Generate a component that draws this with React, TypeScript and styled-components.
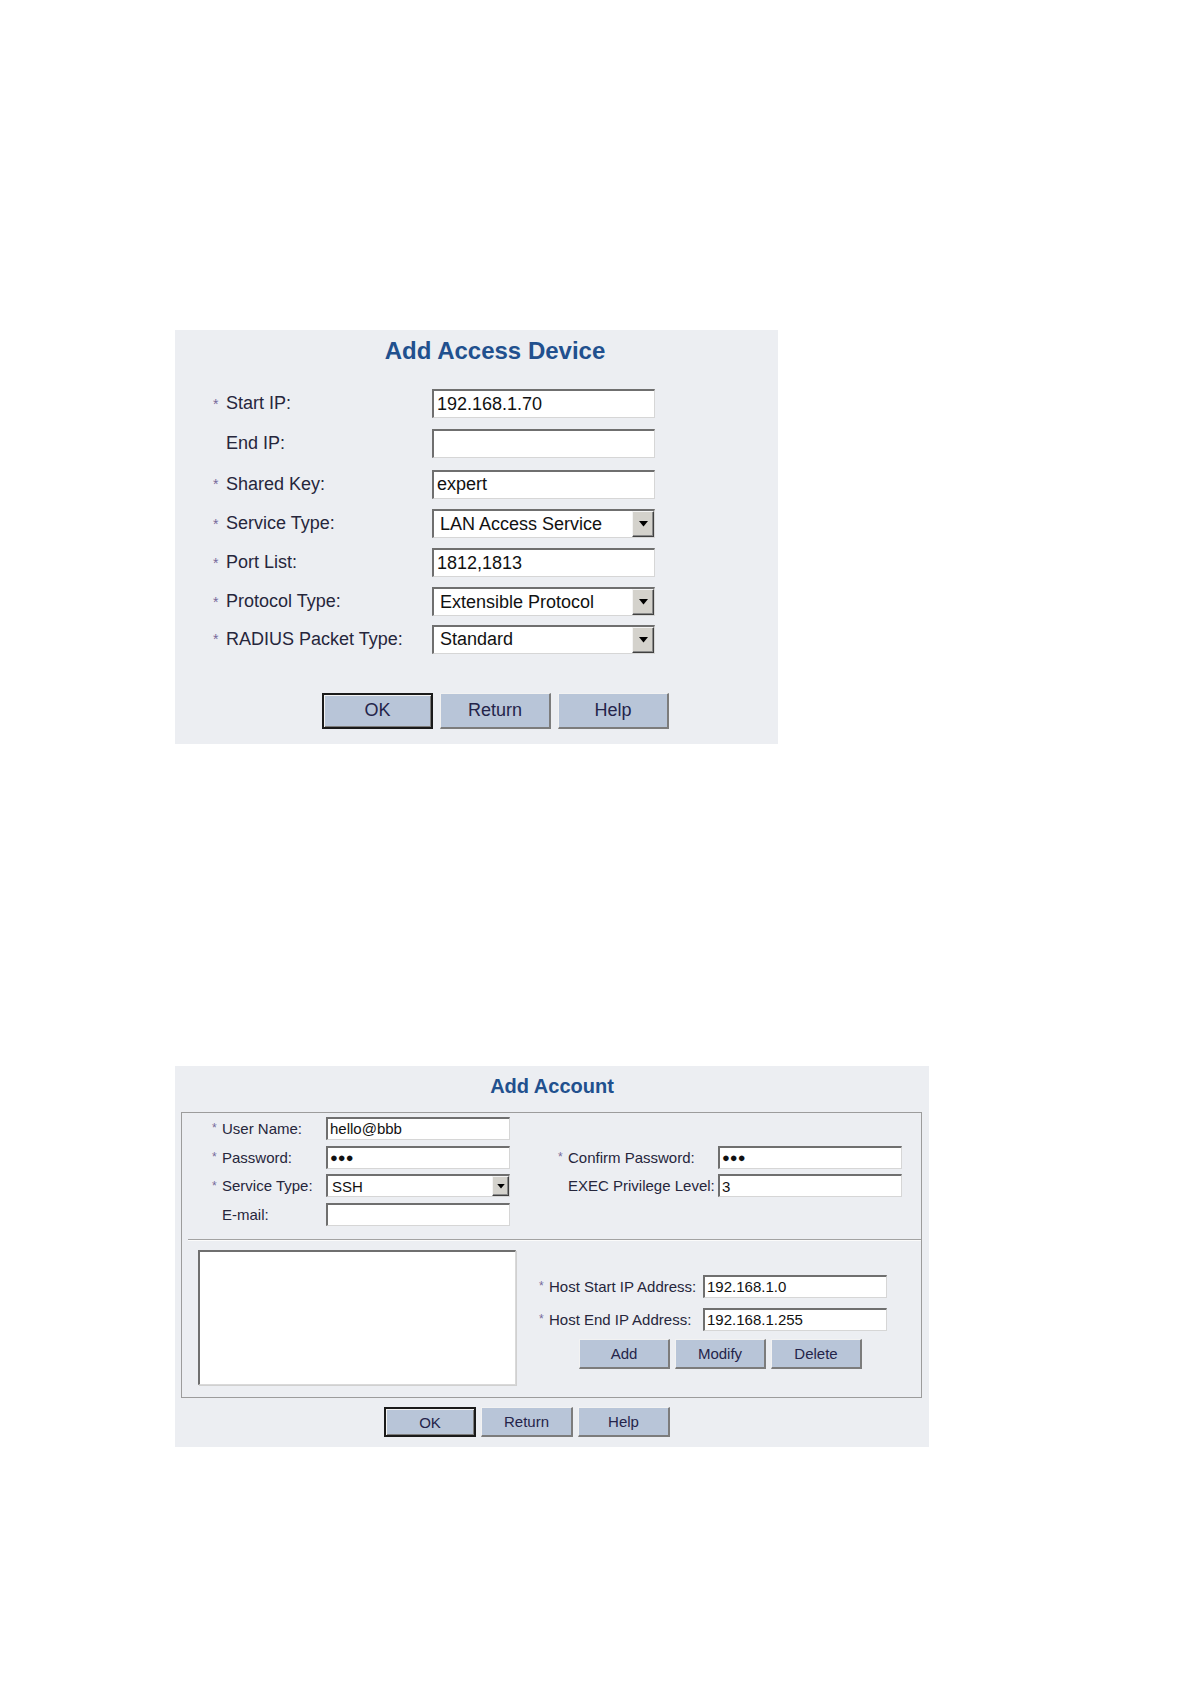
import React from "react";
import styled, { createGlobalStyle, css } from "styled-components";

const GlobalStyle = createGlobalStyle`
  html, body {
    margin: 0;
    padding: 0;
    background: #ffffff;
  }
  body {
    font-family: "Liberation Sans", Arial, sans-serif;
    color: #23233a;
  }
  * {
    box-sizing: border-box;
  }
`;

const Page = styled.div`
  display: flex;
  flex-direction: column;
  align-items: flex-start;
  gap: 322px;
  padding: 330px 0 237px 175px;
`;

const Panel = styled.section<{ $w: number; $h: number }>`
  width: ${(p) => p.$w}px;
  height: ${(p) => p.$h}px;
  background: #eceef2;
  display: flex;
  flex-direction: column;
`;

const Title = styled.h2<{ $big?: boolean }>`
  margin: 0;
  text-align: center;
  font-weight: bold;
  color: #21508e;
  ${(p) =>
    p.$big
      ? css`
          font-size: 24px;
          line-height: 30px;
          padding: 6px 0 0 37px;
        `
      : css`
          font-size: 20px;
          line-height: 26px;
          padding: 7px 0 0 0;
        `}
`;

/* ---------- shared form bits ---------- */

const Label = styled.span<{ $small?: boolean }>`
  display: flex;
  align-items: center;
  height: ${(p) => (p.$small ? 23 : 29)}px;
  white-space: nowrap;
  font-size: ${(p) => (p.$small ? 15 : 18)}px;
  color: #26263c;
`;

const Star = styled.span<{ $small?: boolean }>`
  display: inline-block;
  width: ${(p) => (p.$small ? 10 : 13)}px;
  font-size: ${(p) => (p.$small ? 12 : 14)}px;
  color: #76699a;
`;

const Field = styled.input<{ $small?: boolean; $dots?: boolean }>`
  display: block;
  width: 100%;
  height: ${(p) => (p.$small ? 23 : 29)}px;
  margin: 0;
  padding: 0 0 0 ${(p) => (p.$small ? 2 : 3)}px;
  background: #ffffff;
  border-style: solid;
  border-width: 2px 1px 1px 2px;
  border-color: #6f6f6f #d6d6d6 #d6d6d6 #6f6f6f;
  font-family: "Liberation Sans", Arial, sans-serif;
  font-size: ${(p) => (p.$small ? 15 : 18)}px;
  color: #111;
  outline: none;
  ${(p) =>
    p.$dots &&
    css`
      font-size: 13px;
      padding-left: 2px;
    `}
`;

const SelectBox = styled.div<{ $small?: boolean }>`
  display: flex;
  align-items: stretch;
  width: 100%;
  height: ${(p) => (p.$small ? 23 : 29)}px;
  background: #ffffff;
  border-style: solid;
  border-width: 2px 1px 1px 2px;
  border-color: #6f6f6f #d6d6d6 #d6d6d6 #6f6f6f;
`;

const SelectValue = styled.span<{ $small?: boolean }>`
  flex: 1;
  display: flex;
  align-items: center;
  padding-left: ${(p) => (p.$small ? 4 : 6)}px;
  font-size: ${(p) => (p.$small ? 15 : 18)}px;
  color: #111;
  white-space: nowrap;
  overflow: hidden;
`;

const ArrowBtn = styled.span<{ $small?: boolean }>`
  width: ${(p) => (p.$small ? 17 : 22)}px;
  display: flex;
  align-items: center;
  justify-content: center;
  background: #d4d2cc;
  border-style: solid;
  border-width: 1px;
  border-color: #f4f4f4 #404040 #404040 #f4f4f4;
  box-shadow: inset -1px -1px 0 #8a8a8a;
`;

const Select = ({ value, small }: { value: string; small?: boolean }) => (
  <SelectBox $small={small}>
    <SelectValue $small={small}>{value}</SelectValue>
    <ArrowBtn $small={small}>
      <svg width={small ? 8 : 9} height={small ? 5 : 6} viewBox="0 0 9 6">
        <polygon points="0,0 9,0 4.5,5.5" fill="#000" />
      </svg>
    </ArrowBtn>
  </SelectBox>
);

const ButtonRow = styled.div<{ $indent: number; $top: number; $gap: number }>`
  display: flex;
  gap: ${(p) => p.$gap}px;
  margin-top: ${(p) => p.$top}px;
  padding-left: ${(p) => p.$indent}px;
`;

const Btn = styled.button<{ $w: number; $h: number; $fs: number; $primary?: boolean }>`
  width: ${(p) => p.$w}px;
  height: ${(p) => p.$h}px;
  margin: 0;
  padding: 0;
  background: #b8c5d8;
  font-family: "Liberation Sans", Arial, sans-serif;
  font-size: ${(p) => p.$fs}px;
  color: #24244a;
  cursor: pointer;
  border-style: solid;
  border-width: 1px 2px 2px 1px;
  border-color: #f2f2f2 #7c7c7c #7c7c7c #f2f2f2;
  ${(p) =>
    p.$primary &&
    css`
      border: 2px solid #1a1a1a;
      box-shadow: inset 1px 1px 0 #f2f2f2, inset -1px -1px 0 #7c7c7c;
    `}
`;

/* ---------- Add Access Device ---------- */

const DeviceGrid = styled.div`
  display: grid;
  grid-template-columns: 219px 223px;
  grid-template-rows: 40.3px 40.7px 39.3px 39px 39px 37.7px 29px;
  align-items: start;
  margin-top: 23px;
  padding-left: 38px;
`;

const deviceRows: { label: string; req: boolean; value: string; select?: boolean }[] = [
  { label: "Start IP:", req: true, value: "192.168.1.70" },
  { label: "End IP:", req: false, value: "" },
  { label: "Shared Key:", req: true, value: "expert" },
  { label: "Service Type:", req: true, value: "LAN Access Service", select: true },
  { label: "Port List:", req: true, value: "1812,1813" },
  { label: "Protocol Type:", req: true, value: "Extensible Protocol", select: true },
  { label: "RADIUS Packet Type:", req: true, value: "Standard", select: true },
];

function AccessDevicePanel() {
  return (
    <Panel $w={603} $h={414}>
      <Title $big>Add Access Device</Title>
      <DeviceGrid>
        {deviceRows.map((r) => (
          <React.Fragment key={r.label}>
            <Label>
              <Star>{r.req ? "*" : ""}</Star>
              {r.label}
            </Label>
            {r.select ? <Select value={r.value} /> : <Field value={r.value} readOnly />}
          </React.Fragment>
        ))}
      </DeviceGrid>
      <ButtonRow $indent={147} $top={39} $gap={7}>
        <Btn $w={111} $h={36} $fs={18} $primary>
          OK
        </Btn>
        <Btn $w={111} $h={36} $fs={18}>
          Return
        </Btn>
        <Btn $w={111} $h={36} $fs={18}>
          Help
        </Btn>
      </ButtonRow>
    </Panel>
  );
}

/* ---------- Add Account ---------- */

const Frame = styled.div`
  margin: 13px 7px 0 6px;
  height: 286px;
  border: 1px solid #9c9c9c;
  display: flex;
  flex-direction: column;
`;

const AccountGrid = styled.div`
  display: grid;
  grid-template-columns: 114px 184px 48px 160px 184px;
  grid-auto-rows: 28.7px;
  align-items: center;
  padding: 1px 0 10px 30px;
`;

const Gap = styled.span``;

const HostSection = styled.div`
  flex: 1;
  display: flex;
  margin-left: 6px;
  padding: 10px 0 0 10px;
  border-top: 1px solid #a2a2a2;
  box-shadow: inset 0 1px 0 #fbfbfb;
`;

const ListBox = styled.div`
  width: 318px;
  height: 135px;
  background: #ffffff;
  border-style: solid;
  border-width: 2px 1px 1px 2px;
  border-color: #6f6f6f #d9d9d9 #d9d9d9 #6f6f6f;
  box-shadow: 1px 1px 0 #d0d0d0;
`;

const HostColumn = styled.div`
  margin-left: 23px;
  padding-top: 25px;
`;

const HostGrid = styled.div`
  display: grid;
  grid-template-columns: 164px 184px;
  grid-auto-rows: 23px;
  row-gap: 10px;
  align-items: center;
`;

function AccountPanel() {
  return (
    <Panel $w={754} $h={381}>
      <Title>Add Account</Title>
      <Frame>
        <AccountGrid>
          <Label $small>
            <Star $small>*</Star>User Name:
          </Label>
          <Field $small value="hello@bbb" readOnly />
          <Gap />
          <Gap />
          <Gap />

          <Label $small>
            <Star $small>*</Star>Password:
          </Label>
          <Field $small $dots value="●●●" readOnly />
          <Gap />
          <Label $small>
            <Star $small>*</Star>Confirm Password:
          </Label>
          <Field $small $dots value="●●●" readOnly />

          <Label $small>
            <Star $small>*</Star>Service Type:
          </Label>
          <Select small value="SSH" />
          <Gap />
          <Label $small>
            <Star $small />EXEC Privilege Level:
          </Label>
          <Field $small value="3" readOnly />

          <Label $small>
            <Star $small />E-mail:
          </Label>
          <Field $small value="" readOnly />
          <Gap />
          <Gap />
          <Gap />
        </AccountGrid>

        <HostSection>
          <ListBox />
          <HostColumn>
            <HostGrid>
              <Label $small>
                <Star $small>*</Star>Host Start IP Address:
              </Label>
              <Field $small value="192.168.1.0" readOnly />
              <Label $small>
                <Star $small>*</Star>Host End IP Address:
              </Label>
              <Field $small value="192.168.1.255" readOnly />
            </HostGrid>
            <ButtonRow $indent={40} $top={8} $gap={5}>
              <Btn $w={91} $h={30} $fs={15}>
                Add
              </Btn>
              <Btn $w={91} $h={30} $fs={15}>
                Modify
              </Btn>
              <Btn $w={91} $h={30} $fs={15}>
                Delete
              </Btn>
            </ButtonRow>
          </HostColumn>
        </HostSection>
      </Frame>
      <ButtonRow $indent={209} $top={9} $gap={5}>
        <Btn $w={92} $h={30} $fs={15} $primary>
          OK
        </Btn>
        <Btn $w={92} $h={30} $fs={15}>
          Return
        </Btn>
        <Btn $w={92} $h={30} $fs={15}>
          Help
        </Btn>
      </ButtonRow>
    </Panel>
  );
}

export default function App() {
  return (
    <>
      <GlobalStyle />
      <Page>
        <AccessDevicePanel />
        <AccountPanel />
      </Page>
    </>
  );
}
